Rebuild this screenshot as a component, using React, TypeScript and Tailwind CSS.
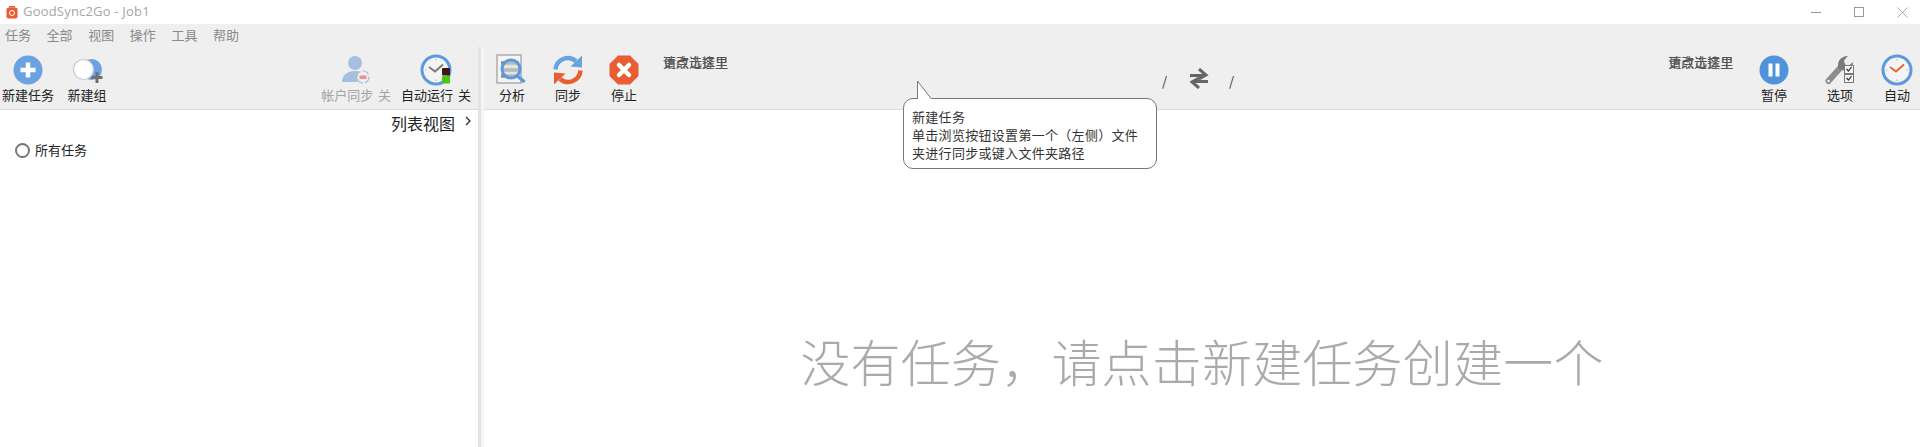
import type { ReactNode } from "react";

const cjk = "font-['Noto_Sans_CJK_SC','Noto_Sans',sans-serif]";

function ToolButton({ icon, label, className = "", muted = false }: { icon: ReactNode; label: string; className?: string; muted?: boolean }) {
  return (
    <div className={`flex flex-col items-center shrink-0 ${className}`}>
      <div className="h-[32px] w-[32px] flex items-center justify-center">{icon}</div>
      <span className={`text-[13px] leading-[18px] whitespace-nowrap [word-spacing:2px] ${muted ? "text-[#a3a3a3]" : "text-[#222]"}`}>{label}</span>
    </div>
  );
}

function PlusCircle() {
  return (
    <svg width="30" height="30" viewBox="0 0 30 30">
      <circle cx="15" cy="15" r="14.5" fill="#6aa2e2" />
      <path d="M15 7.5v15M7.5 15h15" stroke="#fff" strokeWidth="4.5" />
    </svg>
  );
}

function NewGroup() {
  return (
    <svg width="32" height="30" viewBox="0 0 32 30">
      <circle cx="20.500" cy="14.500" r="10.500" fill="#6aa2e2" />
      <circle cx="12.500" cy="14.500" r="10" fill="#fff" stroke="#c9c9c9" strokeWidth="1.2" />
      <path d="M26 17v11M20.500 22.500h11" stroke="#707070" strokeWidth="3" />
    </svg>
  );
}

function AccountSync() {
  return (
    <svg width="32" height="30" viewBox="0 0 32 30">
      <circle cx="15" cy="8" r="7" fill="#a5bfe0" />
      <path d="M2 27c0-7 5-11 13-11 3 0 5 .5 7 2l-5 9z" fill="#a5bfe0" />
      <circle cx="23" cy="22" r="6" fill="#eef0f3" stroke="#a9bcd6" strokeWidth="1.2" strokeDasharray="7 2" />
      <rect x="19.500" y="20.500" width="7" height="3.500" fill="#ee8d8d" />
    </svg>
  );
}

function Clock({ size = 32, badge = false }: { size?: number; badge?: boolean }) {
  return (
    <svg width={size} height={size} viewBox="0 0 32 32">
      <circle cx="16" cy="16" r="14" fill="#f4f4f4" stroke="#5b9ade" strokeWidth="3" />
      <path d="M9 13l6 4.500 8-7" fill="none" stroke={badge ? "#777" : "#e4633a"} strokeWidth="1.800" />
      <path d="M16 5v1.500M16 25.500V27M5 16h1.500M25.500 16H27" stroke="#b8b8b8" strokeWidth="1.200" />
      {badge && (
        <>
          <rect x="22" y="14" width="8" height="7.500" rx="1" fill="#3a1b10" />
          <rect x="22" y="22" width="8" height="7.500" rx="1" fill="#45c80f" />
        </>
      )}
    </svg>
  );
}

function Analyze() {
  return (
    <svg width="32" height="32" viewBox="0 0 32 32">
      <rect x="1" y="1" width="24" height="28" fill="#f4f4f4" stroke="#8a8a8a" />
      <path d="M5 9h18M5 16h18M5 22h18" stroke="#8a8a8a" strokeWidth="3.500" />
      <circle cx="15" cy="15" r="9" fill="#d8d8d8" fillOpacity="0.6" stroke="#5b9ade" strokeWidth="3" />
      <path d="M21.500 22l7 6" stroke="#5b9ade" strokeWidth="3.500" />
    </svg>
  );
}

function SyncIcon() {
  return (
    <svg width="32" height="32" viewBox="0 0 32 32">
      <path d="M3.500 15.500A12.500 12.500 0 0 1 24 7" fill="none" stroke="#6aa2e2" strokeWidth="4.500" />
      <path d="M18.500 12.500L30 13.500V1.500z" fill="#6aa2e2" />
      <path d="M28.500 16.500A12.500 12.500 0 0 1 8 25" fill="none" stroke="#e85d32" strokeWidth="4.500" />
      <path d="M13.500 19.500L2 18.500V30.500z" fill="#e85d32" />
    </svg>
  );
}

function StopIcon() {
  return (
    <svg width="30" height="30" viewBox="0 0 30 30">
      <path d="M9 .5h12L29.500 9v12L21 29.500H9L.5 21V9z" fill="#e85d32" />
      <path d="M10 10l10 10M20 10L10 20" stroke="#fff" strokeWidth="4.500" strokeLinecap="round" />
    </svg>
  );
}

function PauseIcon() {
  return (
    <svg width="30" height="30" viewBox="0 0 30 30">
      <circle cx="15" cy="15" r="14.500" fill="#4f93d9" />
      <rect x="9.500" y="8.500" width="4" height="13" fill="#fff" />
      <rect x="16.500" y="8.500" width="4" height="13" fill="#fff" />
    </svg>
  );
}

function OptionsIcon() {
  return (
    <svg width="32" height="32" viewBox="0 0 32 32">
      <path d="M4.500 27L17 13" stroke="#8c8c8c" strokeWidth="6" strokeLinecap="round" />
      <path d="M15 15c-3-6 1-13 9-13l-4 4.500 1 4 4 1 4-3.500c0 6-6 10-11 8z" fill="#7b7b7b" />
      <circle cx="4.500" cy="27" r="1.300" fill="#f4f4f4" />
      <rect x="20.500" y="11.500" width="9" height="8" fill="#f4f4f4" stroke="#777" />
      <rect x="20.500" y="20.500" width="9" height="8" fill="#f4f4f4" stroke="#777" />
      <path d="M22.500 15l2 2 3-4M22.500 24l2 2 3-4" fill="none" stroke="#333" strokeWidth="1.200" />
    </svg>
  );
}

function SwapArrows() {
  return (
    <svg width="22" height="21" viewBox="0 0 22 21">
      <path d="M2 7.500h14M11 1l7 6-7 4" fill="none" stroke="#666" strokeWidth="3" />
      <path d="M20 13.500H6M11 20l-7-6 7-4" fill="none" stroke="#666" strokeWidth="3" />
    </svg>
  );
}

// two labels drawn on top of each other, as in the app
function GarbledLabel({ className = "" }: { className?: string }) {
  return (
    <div className={`relative h-[16px] w-[66px] shrink-0 text-[13px] leading-[16px] text-[#555] ${className}`}>
      <span className="absolute inset-0 whitespace-nowrap">请点击这里</span>
      <span className="absolute inset-0 whitespace-nowrap">更改选择里</span>
    </div>
  );
}

export default function App() {
  return (
    <div className={`relative h-screen w-full overflow-hidden bg-white flex flex-col ${cjk}`}>
      {/* Title bar */}
      <div className="h-[24px] flex items-center justify-between shrink-0">
        <div className="flex items-center pl-[6px]">
          <svg width="12" height="13" viewBox="0 0 12 13">
            <rect x="0.500" y="1.500" width="11" height="11" rx="2" fill="#e85d32" />
            <path d="M3 1.500V0h6v1.500" fill="#e85d32" />
            <circle cx="6" cy="7" r="2.500" fill="none" stroke="#fff" strokeWidth="1" />
          </svg>
          <span className="ml-[5px] font-['Open_Sans',sans-serif] text-[13px] text-[#a6a6a6] tracking-[0.2px]">GoodSync2Go - Job1</span>
        </div>
        <div className="flex items-center pr-[12px] gap-[33px]">
          <div className="h-px w-[10px] bg-[#999]" />
          <div className="h-[10px] w-[10px] border border-[#999]" />
          <svg width="11" height="11" viewBox="0 0 11 11">
            <path d="M.5.500l10 10M10.500.500l-10 10" stroke="#aaa" />
          </svg>
        </div>
      </div>

      {/* Menu */}
      <div className="h-[23px] bg-[#efefef] flex items-center pl-[5px] pb-[2px] gap-[15.6px] text-[13px] text-[#8a8a8a] shrink-0">
        <span>任务</span>
        <span>全部</span>
        <span>视图</span>
        <span>操作</span>
        <span>工具</span>
        <span>帮助</span>
      </div>

      <div className="flex flex-1 min-h-0">
        {/* Left panel */}
        <div className="w-[478px] shrink-0 flex flex-col">
          <div className="h-[63px] bg-[#efefef] border-b border-[#dcdcdc] flex justify-between pt-[7px] pl-[2px] pr-[7px] shrink-0">
            <div className="flex gap-[13px]">
              <ToolButton icon={<PlusCircle />} label="新建任务" />
              <ToolButton icon={<NewGroup />} label="新建组" className="w-[40px]" />
            </div>
            <div className="flex gap-[10px]">
              <ToolButton icon={<AccountSync />} label="帐户同步 关" muted />
              <ToolButton icon={<Clock badge />} label="自动运行 关" />
            </div>
          </div>
          <div className="flex justify-end items-center h-[25px] pr-[6px] text-[16px] text-[#222] shrink-0">
            <span>列表视图</span>
            <svg width="8" height="10" viewBox="0 0 8 10" className="ml-[9px] mb-[4px]">
              <path d="M2 1l4 4-4 4" fill="none" stroke="#333" strokeWidth="1.400" />
            </svg>
          </div>
          <div className="flex items-center h-[20px] mt-[5px] pl-[15px] text-[13px] text-[#222]">
            <div className="h-[15px] w-[15px] rounded-full border-2 border-[#777]" />
            <span className="ml-[5px]">所有任务</span>
          </div>
        </div>

        {/* Splitter */}
        <div className="w-[6px] shrink-0 bg-[#e3e3e3] border-r-[3px] border-[#f5f5f5]" />

        {/* Right panel */}
        <div className="flex-1 min-w-0 flex flex-col">
          <div className="h-[63px] bg-[#efefef] border-b border-[#dcdcdc] flex pt-[7px] pl-[12px] pr-[7px] shrink-0">
            <div className="flex gap-[24px]">
              <ToolButton icon={<Analyze />} label="分析" />
              <ToolButton icon={<SyncIcon />} label="同步" />
              <ToolButton icon={<StopIcon />} label="停止" />
            </div>
            <GarbledLabel className="ml-[23px]" />
            <div className="flex items-start pt-[14px] ml-[433px] text-[13px] text-[#333]">
              <span className="mt-[3px]">/</span>
              <div className="ml-[21px] mr-[19px]">
                <SwapArrows />
              </div>
              <span className="mt-[3px]">/</span>
            </div>
            <GarbledLabel className="ml-[434px]" />
            <div className="flex ml-auto gap-[34px]">
              <ToolButton icon={<PauseIcon />} label="暂停" />
              <div className="flex gap-[25px]">
                <ToolButton icon={<OptionsIcon />} label="选项" />
                <ToolButton icon={<Clock />} label="自动" />
              </div>
            </div>
          </div>
          <div className="flex-1 flex justify-center pt-[215px] text-[50px] leading-[70px] tracking-[0.2px] font-light text-[#aaaaaa] whitespace-nowrap">
            没有任务，请点击新建任务创建一个
          </div>
        </div>
      </div>

      {/* Balloon hint */}
      <div className="absolute left-[903px] top-[98px] w-[254px] h-[71px] bg-white border border-[#777] rounded-[10px] pl-[8px] pt-[9px] text-[13px] leading-[18px] tracking-[0.3px] text-[#333]">
        <svg width="18" height="20" viewBox="0 0 18 20" className="absolute left-[12px] top-[-19px]">
          <path d="M1.500 1V20H16z" fill="#fff" />
          <path d="M1.500 19V1L15 18.500" fill="none" stroke="#777" />
        </svg>
        <div>新建任务</div>
        <div>单击浏览按钮设置第一个（左侧）文件</div>
        <div>夹进行同步或键入文件夹路径</div>
      </div>
    </div>
  );
}
